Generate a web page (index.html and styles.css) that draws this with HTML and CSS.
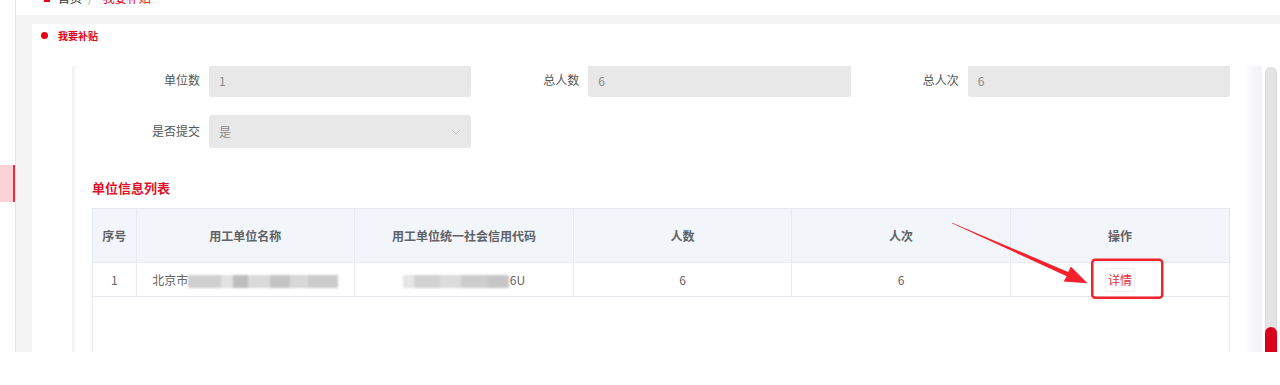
FILE: index.html
```html
<!DOCTYPE html>
<html lang="zh-CN">
<head>
    <meta charset="UTF-8">
    <meta name="viewport" content="width=device-width, initial-scale=1.0">
    <title>我要补贴</title>
    <link rel="stylesheet" href="styles.css">
</head>
<body>

<div class="app">
    <aside class="sidebar">
        <div class="sidebar__active"></div>
    </aside>

    <div class="main">
        <header class="crumbs">
            <div class="crumbs__line">
                <svg class="crumbs__icon" width="10" height="10" viewBox="0 0 10 10">
                    <path d="M1 5 L5 1.5 L9 5 L8 5 L8 9 L2 9 L2 5 Z" fill="#e60012"/>
                </svg>
                <span class="crumbs__home">首页</span>
                <span class="crumbs__sep">/</span>
                <span class="crumbs__current">我要补贴</span>
            </div>
        </header>

        <div class="page">
            <section class="card">
                <h2 class="card__title">我要补贴</h2>

                <div class="card__body">
                    <div class="shade shade--left"></div>

                    <div class="scroll">
                        <div class="form">
                            <div class="field">
                                <label class="field__label">单位数</label>
                                <div class="field__input">1</div>
                            </div>
                            <div class="field">
                                <label class="field__label">总人数</label>
                                <div class="field__input">6</div>
                            </div>
                            <div class="field">
                                <label class="field__label">总人次</label>
                                <div class="field__input">6</div>
                            </div>
                            <div class="field">
                                <label class="field__label">是否提交</label>
                                <div class="field__input field__input--select">
                                    <span>是</span>
                                    <svg width="10" height="6" viewBox="0 0 10 6">
                                        <path d="M1 1 L5 5 L9 1" fill="none" stroke="#c0c4cc" stroke-width="1"/>
                                    </svg>
                                </div>
                            </div>
                        </div>

                        <h3 class="section-title">单位信息列表</h3>

                        <div class="table-wrap">
                            <table class="table">
                                <colgroup>
                                    <col style="width: 43px">
                                    <col><col><col><col><col>
                                </colgroup>
                                <thead>
                                    <tr>
                                        <th>序号</th>
                                        <th>用工单位名称</th>
                                        <th>用工单位统一社会信用代码</th>
                                        <th>人数</th>
                                        <th>人次</th>
                                        <th>操作</th>
                                    </tr>
                                </thead>
                                <tbody>
                                    <tr>
                                        <td>1</td>
                                        <td>北京市<span class="masked masked--name"></span></td>
                                        <td><span class="masked masked--code"></span>6U</td>
                                        <td>6</td>
                                        <td>6</td>
                                        <td><button class="link-btn">详情</button></td>
                                    </tr>
                                </tbody>
                            </table>
                        </div>
                    </div>

                    <div class="shade shade--right"></div>

                    <div class="track">
                        <div class="track__thumb"></div>
                    </div>
                </div>
            </section>
        </div>
    </div>

    <!-- red markup drawn over the screenshot -->
    <svg class="annot" width="1280" height="385" viewBox="0 0 1280 385">
        <rect x="1092.25" y="259.75" width="70" height="38" rx="3" fill="none" stroke="#f5222d" stroke-width="2.5"/>
        <polygon fill="#f5222d"
            points="952.1,222.7 1068.1,271.9 1070.8,266.6 1087.5,283.2 1063.6,281.4 1066.7,276.3 951.9,223.3"/>
    </svg>
</div>

</body>
</html>
```

FILE: styles.css
```css
*,
*::before,
*::after {
    box-sizing: border-box;
}

body {
    margin: 0;
    background: #fff;
    font-family: "Noto Sans CJK SC", "Noto Sans", sans-serif;
    font-size: 12px;
    color: #606266;
}

.app {
    position: relative;
    display: flex;
    height: 352px;
    overflow: hidden;
    background: #f4f4f5;
}

/* sidebar, mostly out of view */
.sidebar {
    width: 16px;
    flex-shrink: 0;
    background: #fff;
    border-right: 1px solid #dfe3ea;
}

.sidebar__active {
    margin-top: 165px;
    height: 37px;
    background: #fbd3d6;
    border-right: 2px solid #e5323e;
}

.main {
    flex: 1;
    display: flex;
    flex-direction: column;
    min-width: 0;
}

.crumbs {
    height: 15px;
    background: #fff;
    overflow: hidden;
    padding-left: 26px;
}

.crumbs__line {
    display: flex;
    align-items: center;
    margin-top: -10px;
    height: 16px;
    line-height: 16px;
}

.crumbs__icon {
    margin-right: 6px;
}

.crumbs__home {
    color: #333;
}

.crumbs__sep {
    color: #aaa;
    margin: 0 10px 0 6px;
}

.crumbs__current {
    color: #e60012;
}

.page {
    flex: 1;
    display: flex;
    padding: 9px 0 0 16px;
    min-height: 0;
}

.card {
    flex: 1;
    display: flex;
    flex-direction: column;
    background: #fff;
    min-width: 0;
}

.card__title {
    display: flex;
    align-items: center;
    height: 42px;
    margin: 0;
    padding: 0 0 20px 9px;
    font-size: 10px;
    font-weight: bold;
    color: #e60012;
}

.card__title::before {
    content: "";
    width: 7px;
    height: 7px;
    border-radius: 50%;
    background: #e60012;
    margin-right: 10px;
}

.card__body {
    flex: 1;
    display: flex;
    padding: 0 3px 0 40px;
    min-height: 0;
}

.shade {
    flex-shrink: 0;
}

.shade--left {
    width: 4px;
    background: linear-gradient(to right, #eef0f4, #fafbfc);
}

.shade--right {
    width: 15px;
    margin-right: 3px;
    background: linear-gradient(to right, #fbfbfc, #f1f2f5);
}

.scroll {
    flex: 1;
    overflow: hidden;
    padding: 0 17px 0 16px;
    min-width: 0;
}

.track {
    width: 12px;
    flex-shrink: 0;
    margin-top: 1px;
    display: flex;
    flex-direction: column;
    justify-content: flex-end;
    background: #e4e4e4;
    border: 1px solid #dadada;
    border-bottom: none;
    border-radius: 6px 6px 0 0;
}

.track__thumb {
    height: 25px;
    margin: 0 -1px;
    background: #d9001b;
    border-radius: 6px 6px 0 0;
}

/* form */
.form {
    display: grid;
    grid-template-columns: repeat(3, 1fr);
    row-gap: 18px;
    margin-top: -2px;
}

.field {
    display: grid;
    grid-template-columns: 117px 1fr;
}

.field__label {
    text-align: right;
    padding-right: 9px;
    line-height: 31px;
    color: #555;
}

.field__input {
    height: 33px;
    line-height: 33px;
    padding: 0 10px;
    background: #e8e8e8;
    border-radius: 3px;
    color: #8a8a8a;
}

.field__input--select {
    display: flex;
    align-items: center;
    justify-content: space-between;
    padding-right: 10px;
}

.section-title {
    margin: 32px 0 12px;
    font-size: 13px;
    line-height: 16px;
    font-weight: bold;
    color: #e0102a;
}

/* table */
.table-wrap {
    min-height: 300px;
    border-left: 1px solid #e6eaf0;
    border-right: 1px solid #e6eaf0;
}

.table {
    width: 100%;
    border-collapse: collapse;
    table-layout: fixed;
}

.table th,
.table td {
    border: 1px solid #e6eaf0;
    text-align: center;
    padding: 0 6px;
    white-space: nowrap;
}

.table tr > :first-child {
    border-left: none;
}

.table tr > :last-child {
    border-right: none;
}

.table th {
    height: 54px;
    background: #f2f5f9;
    font-weight: bold;
    color: #606266;
}

.table td {
    height: 34px;
    color: #666;
}

.masked {
    display: inline-block;
    height: 13px;
    vertical-align: -3px;
    filter: blur(1.2px);
}

.masked--name {
    width: 150px;
    background: linear-gradient(to right,
        #cfcfcf 0 22%, #e2e2e2 22% 30%, #bdbdbd 30% 40%,
        #dadada 40% 55%, #c4c4c4 55% 68%, #d8d8d8 68% 80%, #cbcbcb 80% 100%);
}

.masked--code {
    width: 106px;
    margin-right: 1px;
    background: linear-gradient(to right,
        #e6e6e6 0 10%, #d2d2d2 10% 35%, #dcdcdc 35% 55%,
        #cdcdcd 55% 80%, #c6c6c6 80% 100%);
}

.link-btn {
    height: 24px;
    padding: 0 2px;
    font: inherit;
    line-height: 22px;
    color: #e0303a;
    background: #fff;
    border: 1px solid #eeeeee;
    border-radius: 2px;
    cursor: pointer;
}

.annot {
    position: absolute;
    left: 0;
    top: 0;
    pointer-events: none;
}
```
